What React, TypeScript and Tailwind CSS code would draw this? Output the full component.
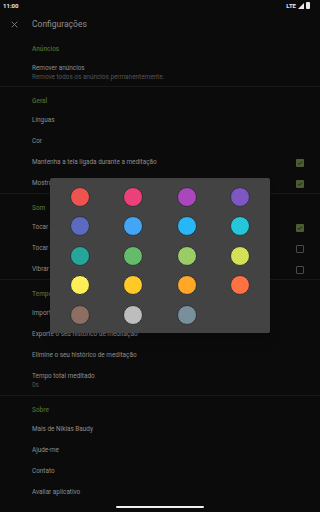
import React from 'react'

const colors = [
  '#EF5350', '#EC407A', '#AB47BC', '#7E57C2',
  '#5C6BC0', '#42A5F5', '#29B6F6', '#26C6DA',
  '#26A69A', '#66BB6A', '#9CCC65', '#D4E157',
  '#FFEE58', '#FFCA28', '#FFA726', '#FF7043',
  '#8D6E63', '#BDBDBD', '#78909C',
]

function Check({ on }: { on: boolean }) {
  if (!on) {
    return <div className="w-[8px] h-[8px] rounded-[1px] border border-[#4a4a4a]" />
  }
  return (
    <div className="w-[8px] h-[8px] rounded-[1px] bg-[#4b5d33] flex items-center justify-center">
      <svg width="6" height="6" viewBox="0 0 24 24">
        <path d="M4 12.5l5 5L20 6.5" fill="none" stroke="#141a0e" strokeWidth="3.5" />
      </svg>
    </div>
  )
}

function Header({ title }: { title: string }) {
  return (
    <div className="h-[22px] pl-[32px] pt-[10px] text-[6.5px] leading-[8px] font-medium text-[#4d6a2c]">
      {title}
    </div>
  )
}

function Item({ label, check }: { label: string; check?: boolean }) {
  return (
    <div className="h-[21px] pl-[32px] pr-[16px] pt-[2px] flex items-center justify-between">
      <span className="text-[6.4px] text-[#8e8e8e]">{label}</span>
      {check !== undefined && <Check on={check} />}
    </div>
  )
}

function TwoLine({ label, sub, h }: { label: string; sub: string; h: string }) {
  return (
    <div className={`${h} pl-[32px] pt-[2px] flex flex-col justify-center`}>
      <span className="text-[6.4px] leading-[9px] text-[#8e8e8e]">{label}</span>
      <span className="text-[6.4px] leading-[9px] text-[#555555]">{sub}</span>
    </div>
  )
}

function Divider() {
  return <div className="h-px bg-[#181818]" />
}

export default function App() {
  return (
    <div className="relative w-[320px] h-[512px] overflow-hidden bg-[#0b0b0b] font-['Roboto',sans-serif]">
      {/* status bar */}
      <div className="h-[11px] flex items-center justify-between px-[3px]">
        <span className="text-[6px] font-bold text-[#e8e8e8]">11:00</span>
        <div className="flex items-center gap-[2px] pr-[7px]">
          <span className="text-[6px] font-bold text-[#e8e8e8] leading-none">LTE</span>
          <svg width="6" height="6" viewBox="0 0 10 10">
            <path d="M10 0V10H0Z" fill="#e8e8e8" />
          </svg>
          <div className="w-[4px] h-[7px] bg-[#e8e8e8] rounded-[1px]" />
        </div>
      </div>

      {/* toolbar */}
      <div className="h-[24px] pt-[2px] flex items-center">
        <div className="w-[32px] flex justify-center pr-[4px]">
          <svg width="7" height="7" viewBox="0 0 10 10">
            <path d="M1 1L9 9M9 1L1 9" stroke="#8a8a8a" strokeWidth="1.2" />
          </svg>
        </div>
        <span className="text-[8.5px] text-[#8f8f8f]">Configurações</span>
      </div>

      <Header title="Anúncios" />
      <TwoLine h="h-[29px]" label="Remover anúncios" sub="Remove todos os anúncios permanentemente." />
      <Divider />

      <Header title="Geral" />
      <Item label="Línguas" />
      <Item label="Cor" />
      <Item label="Mantenha a tela ligada durante a meditação" check={true} />
      <Item label="Mostrar notificação durante a meditação" check={true} />
      <Divider />

      <Header title="Som" />
      <Item label="Tocar som no início da meditação" check={true} />
      <Item label="Tocar som no fim da meditação" check={false} />
      <Item label="Vibrar no fim da meditação" check={false} />
      <Divider />

      <Header title="Tempo de meditação" />
      <Item label="Importar o seu histórico de meditação" />
      <Item label="Exporte o seu histórico de meditação" />
      <Item label="Elimine o seu histórico de meditação" />
      <TwoLine h="h-[30px]" label="Tempo total meditado" sub="0s" />
      <Divider />

      <Header title="Sobre" />
      <Item label="Mais de Niklas Baudy" />
      <Item label="Ajude-me" />
      <Item label="Contato" />
      <Item label="Avaliar aplicativo" />

      {/* nav handle */}
      <div className="absolute left-[116px] top-[506px] w-[88px] h-[2px] rounded-full bg-[#f0f0f0]" />

      {/* color dialog */}
      <div className="absolute left-[50px] top-[178px] w-[220px] h-[155px] bg-[#434343] rounded-[2px] shadow-lg pt-[4px] px-[3px] pb-[3px]">
        <div className="grid grid-cols-4">
          {colors.map((c) => (
            <div key={c} className="h-[29.5px] flex items-center justify-center">
              <div
                className="w-[20px] h-[20px] rounded-full border border-[#2f3338]"
                style={{ backgroundColor: c }}
              />
            </div>
          ))}
        </div>
      </div>
    </div>
  )
}
